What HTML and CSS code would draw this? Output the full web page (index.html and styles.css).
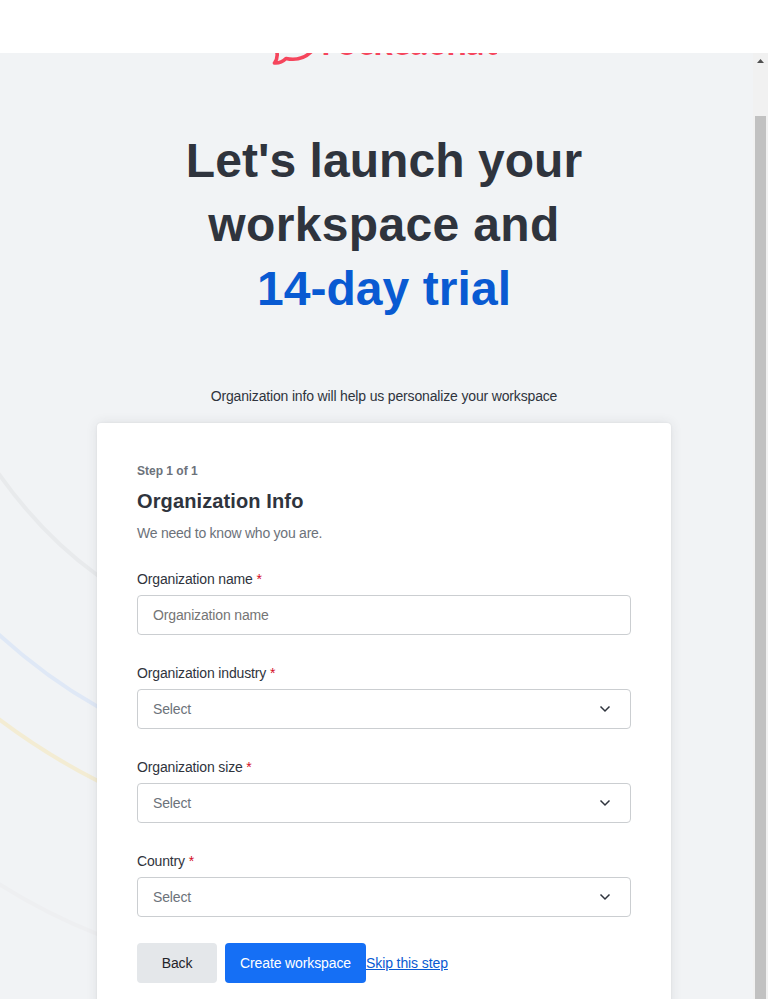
FILE: index.html
```html
<!DOCTYPE html>
<html lang="en">
<head>
<meta charset="utf-8">
<title>Organization Info</title>
<link rel="stylesheet" href="styles.css">
</head>
<body>
<div class="topbar"></div>
<div class="viewport">
  <svg class="waves" width="97" height="946" viewBox="0 53 97 946" fill="none" stroke-width="4" aria-hidden="true">
    <path stroke="#e8eaec" d="M-4 470Q42 536 100 577"/>
    <path stroke="#dfe8f6" d="M-4 632Q46 678 100 708"/>
    <path stroke="#f3ecd3" d="M-4 717Q46 755 100 782"/>
    <path stroke="#eeeff1" d="M-4 882Q46 914 100 935"/>
  </svg>
  <main class="page">
    <svg class="logo" width="226" height="20" viewBox="0 0 226 20" aria-label="rocket.chat">
      <path fill="none" stroke="#f5455c" stroke-width="3.6" stroke-linejoin="round" d="M5-4Q8 4 3.500 10Q10 10.500 15 5.500Q31 9 42-3"/>
      <text class="logo-text" x="50.5 65.500 86 102.500 121 136.500 149 156.500 175.500 195 213.500" y="2.200">rocket.chat</text>
    </svg>
    <h1 class="title"><span class="line-a">Let's launch your</span><br>workspace and<br><span class="accent">14-day trial</span></h1>
    <p class="lead">Organization info will help us personalize your workspace</p>
    <form class="card">
      <p class="step">Step 1 of 1</p>
      <h2 class="heading">Organization Info</h2>
      <p class="hint">We need to know who you are.</p>
      <div class="fields">
        <div class="field">
          <label class="label">Organization name <span class="req">*</span></label>
          <div class="box"><span class="placeholder">Organization name</span></div>
        </div>
        <div class="field">
          <label class="label">Organization industry <span class="req">*</span></label>
          <div class="box"><span class="select">Select</span><svg class="chevron" viewBox="0 0 12 8"><path d="M1.500 1.500L6 6L10.500 1.500"/></svg></div>
        </div>
        <div class="field">
          <label class="label">Organization size <span class="req">*</span></label>
          <div class="box"><span class="select">Select</span><svg class="chevron" viewBox="0 0 12 8"><path d="M1.500 1.500L6 6L10.500 1.500"/></svg></div>
        </div>
        <div class="field">
          <label class="label">Country <span class="req">*</span></label>
          <div class="box"><span class="select">Select</span><svg class="chevron" viewBox="0 0 12 8"><path d="M1.500 1.500L6 6L10.500 1.500"/></svg></div>
        </div>
      </div>
      <div class="actions">
        <button class="btn back" type="button">Back</button>
        <button class="btn primary" type="button">Create workspace</button>
        <a class="skip">Skip this step</a>
      </div>
    </form>
  </main>
  <div class="scrollbar">
    <svg class="arrow" width="7" height="4" viewBox="0 0 7 4"><path fill="#505050" d="M3.500 0L7 4H0Z"/></svg>
    <div class="thumb"></div>
  </div>
</div>
</body>
</html>
```

FILE: styles.css
```css
* { box-sizing: border-box; }
body {
  margin: 0;
  height: 999px;
  overflow: hidden;
  background: #fff;
  color: #2f343d;
  font: 14px/20px "Liberation Sans", sans-serif;
}
h1, h2, p { margin: 0; }
.topbar { height: 53px; }
.viewport {
  position: relative;
  display: flex;
  height: 946px;
  overflow: hidden;
  background: #f1f3f5;
}
.waves { position: absolute; left: 0; top: 0; }
.page {
  position: relative;
  display: flex;
  flex: 1;
  flex-direction: column;
  align-items: center;
  padding-left: 15px;
}
.logo { flex: none; overflow: hidden; }
.logo-text { font: 700 36px "Lato", sans-serif; fill: #f5455c; }
.title {
  margin-top: 56px;
  font-size: 48px;
  line-height: 64px;
  letter-spacing: 0.35px;
  text-align: center;
  white-space: nowrap;
}
.line-a { letter-spacing: 0.05px; }
.accent { color: #095ad2; letter-spacing: 0.05px; }
.lead { margin-top: 65px; letter-spacing: -0.16px; white-space: nowrap; }
.card {
  flex: none;
  width: 574px;
  height: 620px;
  margin-top: 17px;
  padding: 40px;
  border-radius: 4px;
  background: #fff;
  box-shadow: 0 0 2px rgba(47, 52, 61, .08), 0 0 12px rgba(47, 52, 61, .1);
}
.step { font-size: 12px; line-height: 16px; font-weight: 700; color: #6c727a; }
.heading { margin-top: 8px; font-size: 20px; line-height: 28px; letter-spacing: 0.12px; }
.hint { margin-top: 8px; letter-spacing: -0.24px; color: #6c727a; }
.fields { display: flex; flex-direction: column; gap: 28px; margin-top: 26px; }
.label { display: block; height: 20px; letter-spacing: -0.15px; }
.req { color: #d40c26; }
.box {
  display: flex;
  align-items: center;
  justify-content: space-between;
  height: 40px;
  margin-top: 6px;
  padding: 0 19px 0 15px;
  border: 1px solid #cbced1;
  border-radius: 4px;
  letter-spacing: -0.15px;
}
.placeholder { color: #757575; }
.select { color: #6c727a; }
.chevron { width: 12px; height: 8px; fill: none; stroke: #2f343d; stroke-width: 1.5; }
.actions { display: flex; align-items: center; margin-top: 26px; }
.btn {
  height: 40px;
  padding: 0;
  border: 0;
  border-radius: 4px;
  font: inherit;
  letter-spacing: -0.12px;
  white-space: nowrap;
}
.back { width: 80px; margin-right: 8px; background: #e4e7ea; color: #1f2329; }
.primary { width: 141px; background: #156ff5; color: #fff; }
.skip { color: #095ad2; letter-spacing: -0.1px; text-decoration: underline; white-space: nowrap; }
.scrollbar {
  display: flex;
  flex-direction: column;
  align-items: center;
  width: 15px;
  background: #f1f1f1;
}
.arrow { flex: none; margin-top: 6px; }
.thumb { width: 11px; flex: 1; margin-top: 53px; background: #c1c1c1; }
```
